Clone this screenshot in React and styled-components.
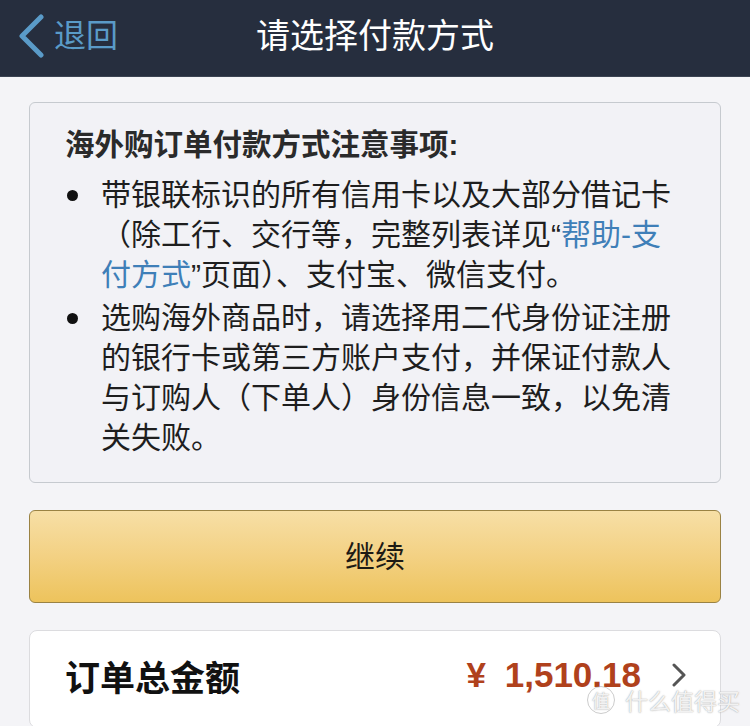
import styled, { createGlobalStyle } from "styled-components";

const GlobalStyle = createGlobalStyle`
  html, body {
    margin: 0;
    padding: 0;
    background: #f4f4f7;
    overflow: hidden;
  }
  body {
    font-family: "Liberation Sans", "Noto Sans CJK SC", sans-serif;
  }
`;

const Page = styled.div`
  position: relative;
  width: 750px;
  height: 726px;
  overflow: hidden;
  background: #f4f4f7;
`;

const NavBar = styled.header`
  display: grid;
  grid-template-columns: 1fr auto 1fr;
  align-items: center;
  height: 77px;
  padding-bottom: 4px;
  box-sizing: border-box;
  background: #262e3e;
  border-bottom: 1px solid #3b4352;
`;

const BackButton = styled.div`
  display: flex;
  align-items: center;
  gap: 10px;
  padding-left: 18px;
  color: #5a9bc8;
  font-size: 32px;
  line-height: 1;
`;

const NavTitle = styled.h1`
  margin: 0;
  color: #ffffff;
  font-size: 34px;
  font-weight: 400;
  line-height: 1;
`;

const Content = styled.main`
  display: flex;
  flex-direction: column;
  gap: 27px;
  padding: 25px 29px 0;
`;

const NoticeCard = styled.section`
  padding: 22px 30px 24px 35px;
  background: #f2f2f6;
  border: 1.5px solid #c6cacf;
  border-radius: 6px;
`;

const NoticeTitle = styled.h2`
  margin: 0 0 10px;
  font-size: 29.5px;
  font-weight: 700;
  line-height: 40px;
  color: #2a2a2a;
`;

const NoticeList = styled.ul`
  margin: 0;
  padding: 0;
  list-style: none;
  display: flex;
  flex-direction: column;
  gap: 3px;
`;

const NoticeItem = styled.li`
  display: grid;
  grid-template-columns: 36px 575px;
  font-size: 30px;
  line-height: 40px;
  color: #1e1e1e;

  &::before {
    content: "";
    width: 11px;
    height: 11px;
    margin: 15px 0 0 2px;
    border-radius: 50%;
    background: #111;
  }
`;

const HelpLink = styled.span`
  color: #3f7fb8;
`;

const ContinueButton = styled.button`
  height: 93px;
  padding: 0 0 6px;
  border: 1.5px solid #9a8243;
  border-radius: 6px;
  background: linear-gradient(180deg, #f7dfa6 0%, #f3d183 50%, #edc35c 100%);
  font-family: "Noto Sans CJK SC", sans-serif;
  font-size: 30px;
  color: #1d1a14;
  line-height: 1;
`;

const TotalCard = styled.section`
  display: flex;
  align-items: center;
  height: 98px;
  padding: 0 33px 8px 35px;
  box-sizing: border-box;
  background: #ffffff;
  border: 1.5px solid #dcdcdf;
  border-radius: 8px;
`;

const TotalLabel = styled.span`
  flex: 1;
  font-family: "Noto Sans CJK SC", sans-serif;
  font-size: 35px;
  font-weight: 700;
  color: #111;
`;

const Price = styled.span`
  font-size: 35px;
  font-weight: 700;
  word-spacing: 9px;
  color: #b0411c;
  margin-right: 30px;
`;

const Watermark = styled.div`
  position: absolute;
  right: 10px;
  bottom: 12px;
  display: flex;
  align-items: center;
  gap: 10px;
  font-family: "Noto Sans CJK SC", sans-serif;
  font-size: 23px;
  line-height: 1;
  color: rgba(255, 255, 255, 0.85);
  text-shadow: 0 0 1px rgba(120, 120, 120, 0.6), 0 0 2px rgba(150, 150, 150, 0.4);
`;

const WatermarkBadge = styled.span`
  display: flex;
  align-items: center;
  justify-content: center;
  width: 26px;
  height: 26px;
  border: 1.5px solid rgba(170, 170, 170, 0.6);
  border-radius: 50%;
  font-size: 18px;
`;

function BackChevron() {
  return (
    <svg width="26" height="44" viewBox="0 0 26 44">
      <path
        d="M23 3 L4 22 L23 41"
        fill="none"
        stroke="#5a9bc8"
        strokeWidth="5"
        strokeLinecap="round"
        strokeLinejoin="round"
      />
    </svg>
  );
}

function RightChevron() {
  return (
    <svg width="16" height="24" viewBox="0 0 16 24">
      <path
        d="M3 2 L13 12 L3 22"
        fill="none"
        stroke="#555"
        strokeWidth="3"
        strokeLinecap="round"
        strokeLinejoin="round"
      />
    </svg>
  );
}

export default function App() {
  return (
    <Page>
      <GlobalStyle />
      <NavBar>
        <BackButton>
          <BackChevron />
          退回
        </BackButton>
        <NavTitle>请选择付款方式</NavTitle>
        <div />
      </NavBar>
      <Content>
        <NoticeCard>
          <NoticeTitle>海外购订单付款方式注意事项:</NoticeTitle>
          <NoticeList>
            <NoticeItem>
              <span>
                带银联标识的所有信用卡以及大部分借记卡（除工行、交行等，完整列表详见“
                <HelpLink>帮助-支付方式</HelpLink>”页面）、支付宝、微信支付。
              </span>
            </NoticeItem>
            <NoticeItem>
              <span>
                选购海外商品时，请选择用二代身份证注册的银行卡或第三方账户支付，并保证付款人与订购人（下单人）身份信息一致，以免清关失败。
              </span>
            </NoticeItem>
          </NoticeList>
        </NoticeCard>
        <ContinueButton>继续</ContinueButton>
        <TotalCard>
          <TotalLabel>订单总金额</TotalLabel>
          <Price>¥ 1,510.18</Price>
          <RightChevron />
        </TotalCard>
      </Content>
      <Watermark>
        <WatermarkBadge>值</WatermarkBadge>
        什么值得买
      </Watermark>
    </Page>
  );
}
